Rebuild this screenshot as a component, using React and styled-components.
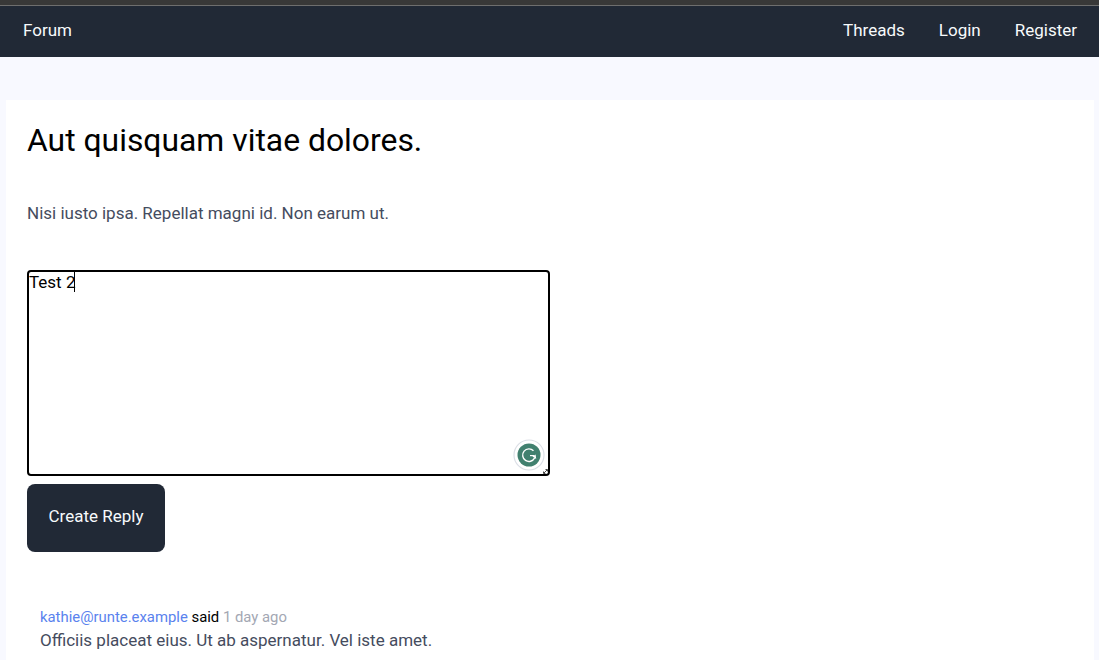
import React from 'react';
import styled, { createGlobalStyle } from 'styled-components';

const GlobalStyle = createGlobalStyle`
  html, body {
    margin: 0;
    padding: 0;
    height: 100%;
    overflow: hidden;
    background: #f8f9ff;
    font-family: Roboto, "Liberation Sans", sans-serif;
  }
`;

const WindowEdge = styled.div`
  height: 5px;
  background: #383838;
  border-bottom: 1px solid #6e6e6e;
`;

const Nav = styled.nav`
  height: 51px;
  background: #212936;
  display: flex;
  align-items: center;
  justify-content: space-between;
  padding: 0 22px 4px 23px;
  box-sizing: border-box;
`;

const NavLinks = styled.div`
  display: flex;
  gap: 34px;
`;

const NavLink = styled.a`
  color: #f7fafc;
  font-size: 17px;
  line-height: 24px;
`;

const Panel = styled.main`
  margin: 43px 5px 0 6px;
  padding: 20px 21px 0;
  background: #fff;
  height: 560px;
`;

const Title = styled.h1`
  margin: 0;
  font-size: 31.875px;
  line-height: 40px;
  font-weight: 400;
  color: #000;
`;

const Body = styled.p`
  margin: 41px 0 0;
  font-size: 17px;
  line-height: 24px;
  color: #454c5e;
`;

const EditorWrap = styled.div`
  position: relative;
  width: 523px;
  height: 206px;
  margin-top: 45px;
`;

const Editor = styled.div`
  box-sizing: border-box;
  width: 100%;
  height: 100%;
  border: 2px solid #000;
  border-radius: 4px;
  font-size: 17px;
  line-height: 20px;
  color: #000;
  background: #fff;
`;

const Caret = styled.span`
  display: inline-block;
  width: 1px;
  height: 20px;
  margin-left: -1px;
  background: #000;
  vertical-align: top;
`;

const Badge = styled.svg`
  position: absolute;
  right: 5px;
  bottom: 5px;
`;

const Grip = styled.svg`
  position: absolute;
  right: 1px;
  bottom: 1px;
`;

const SubmitButton = styled.button`
  display: block;
  width: 138px;
  height: 68px;
  margin-top: 8px;
  padding: 0 0 4px;
  border: 0;
  border-radius: 8px;
  background: #212936;
  color: #f7fafc;
  font-family: inherit;
  font-size: 17px;
`;

const Reply = styled.section`
  margin-top: 55px;
  padding-left: 13px;
`;

const ReplyMeta = styled.div`
  font-size: 14.875px;
  line-height: 20px;
  color: #000;
`;

const Author = styled.a`
  color: #5a82ee;
`;

const Time = styled.span`
  color: #a3a7b3;
`;

const ReplyBody = styled.p`
  margin: 1px 0 0;
  font-size: 17px;
  line-height: 24px;
  color: #454c5e;
`;

export default function App() {
  return (
    <>
      <GlobalStyle />
      <WindowEdge />
      <Nav>
        <NavLink>Forum</NavLink>
        <NavLinks>
          <NavLink>Threads</NavLink>
          <NavLink>Login</NavLink>
          <NavLink>Register</NavLink>
        </NavLinks>
      </Nav>
      <Panel>
        <Title>Aut quisquam vitae dolores.</Title>
        <Body>Nisi iusto ipsa. Repellat magni id. Non earum ut.</Body>
        <EditorWrap>
          <Editor>
            Test 2<Caret />
          </Editor>
          <Badge width="32" height="32" viewBox="0 0 32 32">
            <circle cx="16" cy="16" r="15" fill="#fff" stroke="#dcdfe6" strokeWidth="1.2" />
            <circle cx="16" cy="16" r="11.5" fill="#41806f" />
            <path
              d="M20.5 11.8 A6.3 6.3 0 1 0 21.6 19"
              fill="none"
              stroke="#fff"
              strokeWidth="1.4"
            />
            <path d="M17 16.6 H21" fill="none" stroke="#fff" strokeWidth="1.2" />
            <path d="M23.2 20 L22.6 15.6 L19.4 17.6 Z" fill="#fff" />
          </Badge>
          <Grip width="7" height="7" viewBox="0 0 7 7">
            <path d="M2 5 L5 2 M1.5 3.5 V5.5 H3.5 M3.5 1.5 H5.5 V3.5" stroke="#333" strokeWidth="0.9" fill="none" />
          </Grip>
        </EditorWrap>
        <SubmitButton>Create Reply</SubmitButton>
        <Reply>
          <ReplyMeta>
            <Author>kathie@runte.example</Author> said <Time>1 day ago</Time>
          </ReplyMeta>
          <ReplyBody>Officiis placeat eius. Ut ab aspernatur. Vel iste amet.</ReplyBody>
        </Reply>
      </Panel>
    </>
  );
}
